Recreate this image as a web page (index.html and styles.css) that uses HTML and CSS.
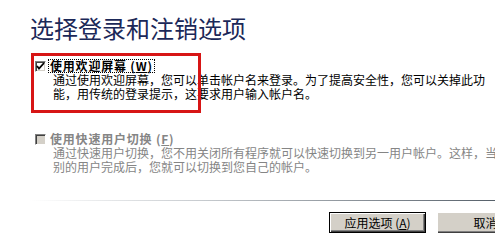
FILE: index.html
```html
<!DOCTYPE html>
<html>
<head>
<meta charset="utf-8">
<link rel="stylesheet" href="styles.css">
</head>
<body>
<div class="page">
  <h1 class="title">选择登录和注销选项</h1>
  <div class="options">
    <div class="option">
      <div class="opt-row">
        <span class="check checked">
          <svg width="9" height="9" viewBox="0 0 9 9"><path d="M1 4 L3 6.5 L8 1" fill="none" stroke="#000" stroke-width="1.8"/></svg>
        </span>
        <span class="label focus">使用欢迎屏幕 (<u>W</u>)</span>
      </div>
      <div class="desc">
        <div class="line">通过使用欢迎屏幕，您可以单击帐户名来登录。为了提高安全性，您可以关掉此功</div>
        <div class="line">能，用传统的登录提示，这要求用户输入帐户名。</div>
      </div>
    </div>
    <div class="option disabled">
      <div class="opt-row">
        <span class="check"></span>
        <span class="label">使用快速用户切换 (<u>F</u>)</span>
      </div>
      <div class="desc">
        <div class="line">通过快速用户切换，您不用关闭所有程序就可以快速切换到另一用户帐户。这样，当</div>
        <div class="line">别的用户完成后，您就可以切换到您自己的帐户。</div>
      </div>
    </div>
  </div>
  <div class="separator"></div>
  <div class="buttons">
    <button class="btn default">应用选项 (<u>A</u>)</button>
    <button class="btn">取消</button>
  </div>
  <div class="highlight"></div>
</div>
</body>
</html>
```

FILE: styles.css
```css
html, body {
  margin: 0;
  padding: 0;
  background: #fff;
  overflow: hidden;
}
.page {
  position: relative;
  width: 495px;
  height: 245px;
  overflow: hidden;
  font-family: "Noto Sans CJK SC", "DejaVu Sans", sans-serif;
  font-size: 12px;
  color: #000;
}
.title {
  margin: 0;
  padding: 12px 0 0 30px;
  font-size: 24px;
  font-weight: normal;
  line-height: 31px;
  color: #1b2858;
}
.options {
  padding: 16px 0 0 35px;
}
.option + .option {
  margin-top: 31px;
}
.opt-row {
  display: flex;
  align-items: center;
  height: 14px;
}
.check {
  width: 11px;
  height: 11px;
  box-sizing: border-box;
  border-top: 1px solid #808080;
  border-left: 1px solid #808080;
  border-right: 1px solid #fff;
  border-bottom: 1px solid #fff;
  box-shadow: inset 1px 1px 0 #404040, inset -1px -1px 0 #d4d0c8;
  background: #fff;
  display: flex;
  align-items: center;
  justify-content: center;
  margin-right: 3px;
}
.disabled .check {
  background: #d4d0c8;
}
.label {
  font-weight: bold;
  line-height: 12px;
  padding: 0 1px;
  letter-spacing: 0.8px;
  white-space: nowrap;
}
.focus {
  outline: 1px dotted #000;
  outline-offset: 0;
}
.desc {
  padding-left: 18px;
}
.line {
  white-space: nowrap;
  line-height: 14px;
}
.disabled .label,
.disabled .desc {
  color: #858585;
}
.separator {
  margin-top: 26px;
  height: 1px;
  background: linear-gradient(to right, #fff 6%, #c8ccd0 40%, #56606a 100%);
}
.buttons {
  display: flex;
  justify-content: flex-end;
  gap: 11px;
  margin-top: 11px;
  margin-right: -39px;
}
.btn {
  width: 97px;
  height: 21px;
  padding: 0;
  font-family: "Noto Sans CJK SC", "DejaVu Sans", sans-serif;
  font-size: 12px;
  color: #000;
  background: #d4d0c8;
  border: none;
  box-shadow: inset 1px 1px 0 #fff, inset -1px -1px 0 #404040, inset -2px -2px 0 #808080;
}
.btn.default {
  border: 1px solid #000;
}
.highlight {
  position: absolute;
  left: 31px;
  top: 53px;
  width: 170px;
  height: 60px;
  box-sizing: border-box;
  border: 3px solid #d71515;
  pointer-events: none;
}
```
